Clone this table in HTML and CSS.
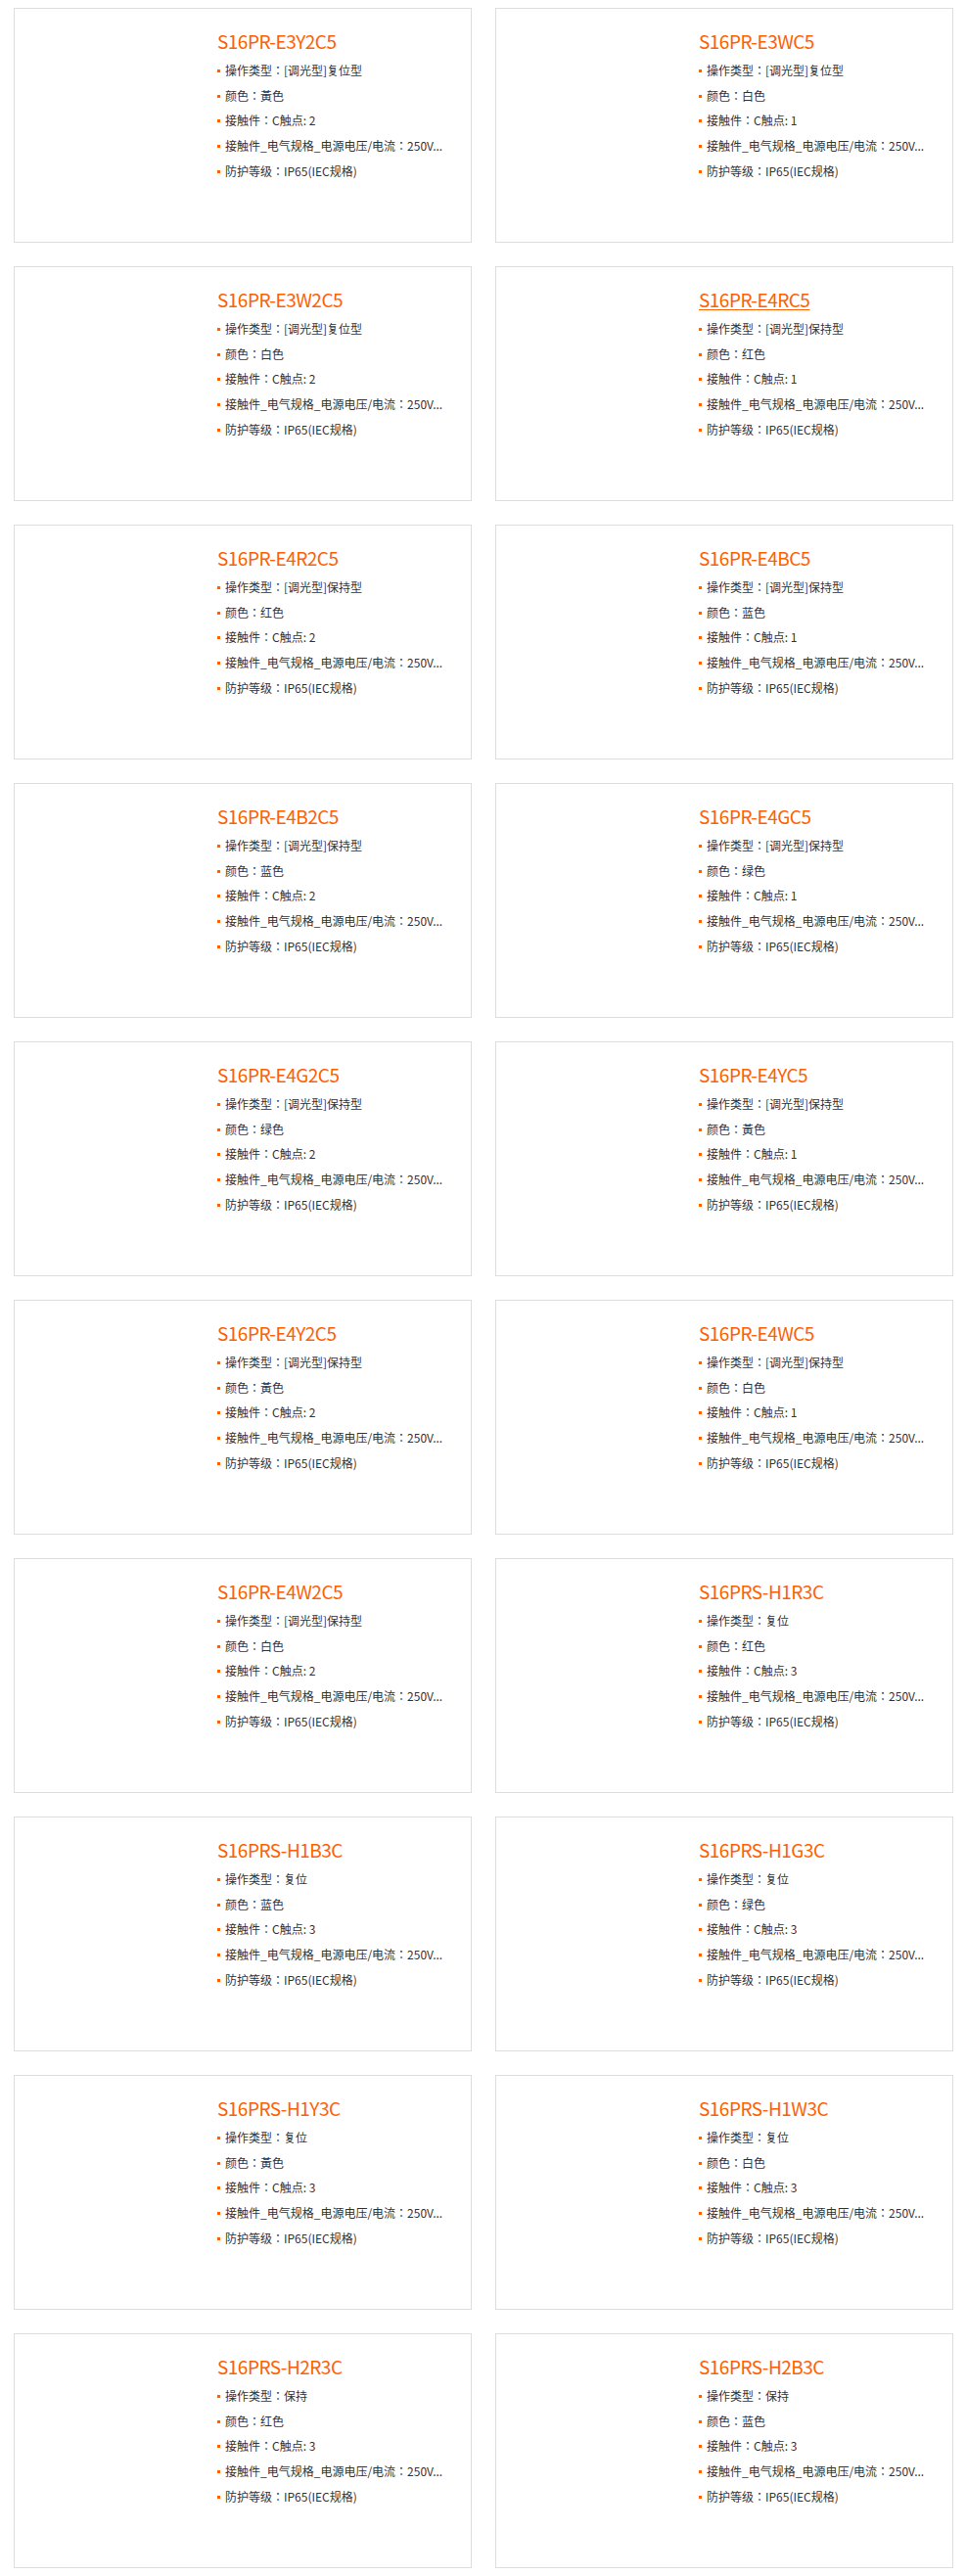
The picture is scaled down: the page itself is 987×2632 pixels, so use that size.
FILE: index.html
```html
<!DOCTYPE html>
<html lang="zh-CN">
<head>
  <meta charset="UTF-8">
  <meta name="viewport" content="width=device-width, initial-scale=1.0">
  <title>S16 系列</title>
  <link rel="stylesheet" href="styles.css">
</head>
<body>
  <div class="product-list">
    <div class="product-card">
      <a class="product-name" href="#">S16PR-E3Y2C5</a>
      <ul class="spec-list">
        <li>操作类型：[调光型]复位型</li>
        <li>颜色：黃色</li>
        <li>接触件：C触点: 2</li>
        <li>接触件_电气规格_电源电压/电流：250V...</li>
        <li>防护等级：IP65(IEC规格)</li>
      </ul>
    </div>
    <div class="product-card">
      <a class="product-name" href="#">S16PR-E3WC5</a>
      <ul class="spec-list">
        <li>操作类型：[调光型]复位型</li>
        <li>颜色：白色</li>
        <li>接触件：C触点: 1</li>
        <li>接触件_电气规格_电源电压/电流：250V...</li>
        <li>防护等级：IP65(IEC规格)</li>
      </ul>
    </div>

    <div class="product-card">
      <a class="product-name" href="#">S16PR-E3W2C5</a>
      <ul class="spec-list">
        <li>操作类型：[调光型]复位型</li>
        <li>颜色：白色</li>
        <li>接触件：C触点: 2</li>
        <li>接触件_电气规格_电源电压/电流：250V...</li>
        <li>防护等级：IP65(IEC规格)</li>
      </ul>
    </div>
    <div class="product-card">
      <a class="product-name hover" href="#">S16PR-E4RC5</a>
      <ul class="spec-list">
        <li>操作类型：[调光型]保持型</li>
        <li>颜色：红色</li>
        <li>接触件：C触点: 1</li>
        <li>接触件_电气规格_电源电压/电流：250V...</li>
        <li>防护等级：IP65(IEC规格)</li>
      </ul>
    </div>

    <div class="product-card">
      <a class="product-name" href="#">S16PR-E4R2C5</a>
      <ul class="spec-list">
        <li>操作类型：[调光型]保持型</li>
        <li>颜色：红色</li>
        <li>接触件：C触点: 2</li>
        <li>接触件_电气规格_电源电压/电流：250V...</li>
        <li>防护等级：IP65(IEC规格)</li>
      </ul>
    </div>
    <div class="product-card">
      <a class="product-name" href="#">S16PR-E4BC5</a>
      <ul class="spec-list">
        <li>操作类型：[调光型]保持型</li>
        <li>颜色：蓝色</li>
        <li>接触件：C触点: 1</li>
        <li>接触件_电气规格_电源电压/电流：250V...</li>
        <li>防护等级：IP65(IEC规格)</li>
      </ul>
    </div>

    <div class="product-card">
      <a class="product-name" href="#">S16PR-E4B2C5</a>
      <ul class="spec-list">
        <li>操作类型：[调光型]保持型</li>
        <li>颜色：蓝色</li>
        <li>接触件：C触点: 2</li>
        <li>接触件_电气规格_电源电压/电流：250V...</li>
        <li>防护等级：IP65(IEC规格)</li>
      </ul>
    </div>
    <div class="product-card">
      <a class="product-name" href="#">S16PR-E4GC5</a>
      <ul class="spec-list">
        <li>操作类型：[调光型]保持型</li>
        <li>颜色：绿色</li>
        <li>接触件：C触点: 1</li>
        <li>接触件_电气规格_电源电压/电流：250V...</li>
        <li>防护等级：IP65(IEC规格)</li>
      </ul>
    </div>

    <div class="product-card">
      <a class="product-name" href="#">S16PR-E4G2C5</a>
      <ul class="spec-list">
        <li>操作类型：[调光型]保持型</li>
        <li>颜色：绿色</li>
        <li>接触件：C触点: 2</li>
        <li>接触件_电气规格_电源电压/电流：250V...</li>
        <li>防护等级：IP65(IEC规格)</li>
      </ul>
    </div>
    <div class="product-card">
      <a class="product-name" href="#">S16PR-E4YC5</a>
      <ul class="spec-list">
        <li>操作类型：[调光型]保持型</li>
        <li>颜色：黃色</li>
        <li>接触件：C触点: 1</li>
        <li>接触件_电气规格_电源电压/电流：250V...</li>
        <li>防护等级：IP65(IEC规格)</li>
      </ul>
    </div>

    <div class="product-card">
      <a class="product-name" href="#">S16PR-E4Y2C5</a>
      <ul class="spec-list">
        <li>操作类型：[调光型]保持型</li>
        <li>颜色：黃色</li>
        <li>接触件：C触点: 2</li>
        <li>接触件_电气规格_电源电压/电流：250V...</li>
        <li>防护等级：IP65(IEC规格)</li>
      </ul>
    </div>
    <div class="product-card">
      <a class="product-name" href="#">S16PR-E4WC5</a>
      <ul class="spec-list">
        <li>操作类型：[调光型]保持型</li>
        <li>颜色：白色</li>
        <li>接触件：C触点: 1</li>
        <li>接触件_电气规格_电源电压/电流：250V...</li>
        <li>防护等级：IP65(IEC规格)</li>
      </ul>
    </div>

    <div class="product-card">
      <a class="product-name" href="#">S16PR-E4W2C5</a>
      <ul class="spec-list">
        <li>操作类型：[调光型]保持型</li>
        <li>颜色：白色</li>
        <li>接触件：C触点: 2</li>
        <li>接触件_电气规格_电源电压/电流：250V...</li>
        <li>防护等级：IP65(IEC规格)</li>
      </ul>
    </div>
    <div class="product-card">
      <a class="product-name" href="#">S16PRS-H1R3C</a>
      <ul class="spec-list">
        <li>操作类型：复位</li>
        <li>颜色：红色</li>
        <li>接触件：C触点: 3</li>
        <li>接触件_电气规格_电源电压/电流：250V...</li>
        <li>防护等级：IP65(IEC规格)</li>
      </ul>
    </div>

    <div class="product-card">
      <a class="product-name" href="#">S16PRS-H1B3C</a>
      <ul class="spec-list">
        <li>操作类型：复位</li>
        <li>颜色：蓝色</li>
        <li>接触件：C触点: 3</li>
        <li>接触件_电气规格_电源电压/电流：250V...</li>
        <li>防护等级：IP65(IEC规格)</li>
      </ul>
    </div>
    <div class="product-card">
      <a class="product-name" href="#">S16PRS-H1G3C</a>
      <ul class="spec-list">
        <li>操作类型：复位</li>
        <li>颜色：绿色</li>
        <li>接触件：C触点: 3</li>
        <li>接触件_电气规格_电源电压/电流：250V...</li>
        <li>防护等级：IP65(IEC规格)</li>
      </ul>
    </div>

    <div class="product-card">
      <a class="product-name" href="#">S16PRS-H1Y3C</a>
      <ul class="spec-list">
        <li>操作类型：复位</li>
        <li>颜色：黃色</li>
        <li>接触件：C触点: 3</li>
        <li>接触件_电气规格_电源电压/电流：250V...</li>
        <li>防护等级：IP65(IEC规格)</li>
      </ul>
    </div>
    <div class="product-card">
      <a class="product-name" href="#">S16PRS-H1W3C</a>
      <ul class="spec-list">
        <li>操作类型：复位</li>
        <li>颜色：白色</li>
        <li>接触件：C触点: 3</li>
        <li>接触件_电气规格_电源电压/电流：250V...</li>
        <li>防护等级：IP65(IEC规格)</li>
      </ul>
    </div>

    <div class="product-card">
      <a class="product-name" href="#">S16PRS-H2R3C</a>
      <ul class="spec-list">
        <li>操作类型：保持</li>
        <li>颜色：红色</li>
        <li>接触件：C触点: 3</li>
        <li>接触件_电气规格_电源电压/电流：250V...</li>
        <li>防护等级：IP65(IEC规格)</li>
      </ul>
    </div>
    <div class="product-card">
      <a class="product-name" href="#">S16PRS-H2B3C</a>
      <ul class="spec-list">
        <li>操作类型：保持</li>
        <li>颜色：蓝色</li>
        <li>接触件：C触点: 3</li>
        <li>接触件_电气规格_电源电压/电流：250V...</li>
        <li>防护等级：IP65(IEC规格)</li>
      </ul>
    </div>
  </div>
</body>
</html>
```

FILE: styles.css
```css
body {
  margin: 0;
  background: #fff;
  color: #333;
  font-family: "Noto Sans CJK SC", "Noto Sans", sans-serif;
}

.product-list {
  width: 960px;
  margin: 0 13px 0 14px;
  padding: 8px 0;
  display: grid;
  grid-template-columns: 1fr 1fr;
  gap: 24px;
}

.product-card {
  box-sizing: border-box;
  height: 240px;
  border: 1px solid #ddd;
  padding: 18px 10px 0 207px;
}

.product-name {
  display: inline-block;
  font-size: 19px;
  line-height: 30px;
  letter-spacing: -0.5px;
  color: #ff6000;
  text-decoration: none;
}

.product-name.hover {
  text-decoration: underline;
  text-underline-offset: 2px;
}

.spec-list {
  list-style: none;
  margin: 2px 0 0;
  padding: 0;
}

/* centred full-width colon like the original page */
.spec-list li {
  position: relative;
  padding-left: 8px;
  font-family: "Noto Sans CJK JP", "Noto Sans CJK SC", sans-serif;
  font-feature-settings: "locl" 0;
  font-size: 12px;
  line-height: 25.7px;
  white-space: nowrap;
}

.spec-list li::before {
  content: "";
  position: absolute;
  left: 0;
  top: 12px;
  width: 3px;
  height: 3px;
  background: #ff6000;
}
```
